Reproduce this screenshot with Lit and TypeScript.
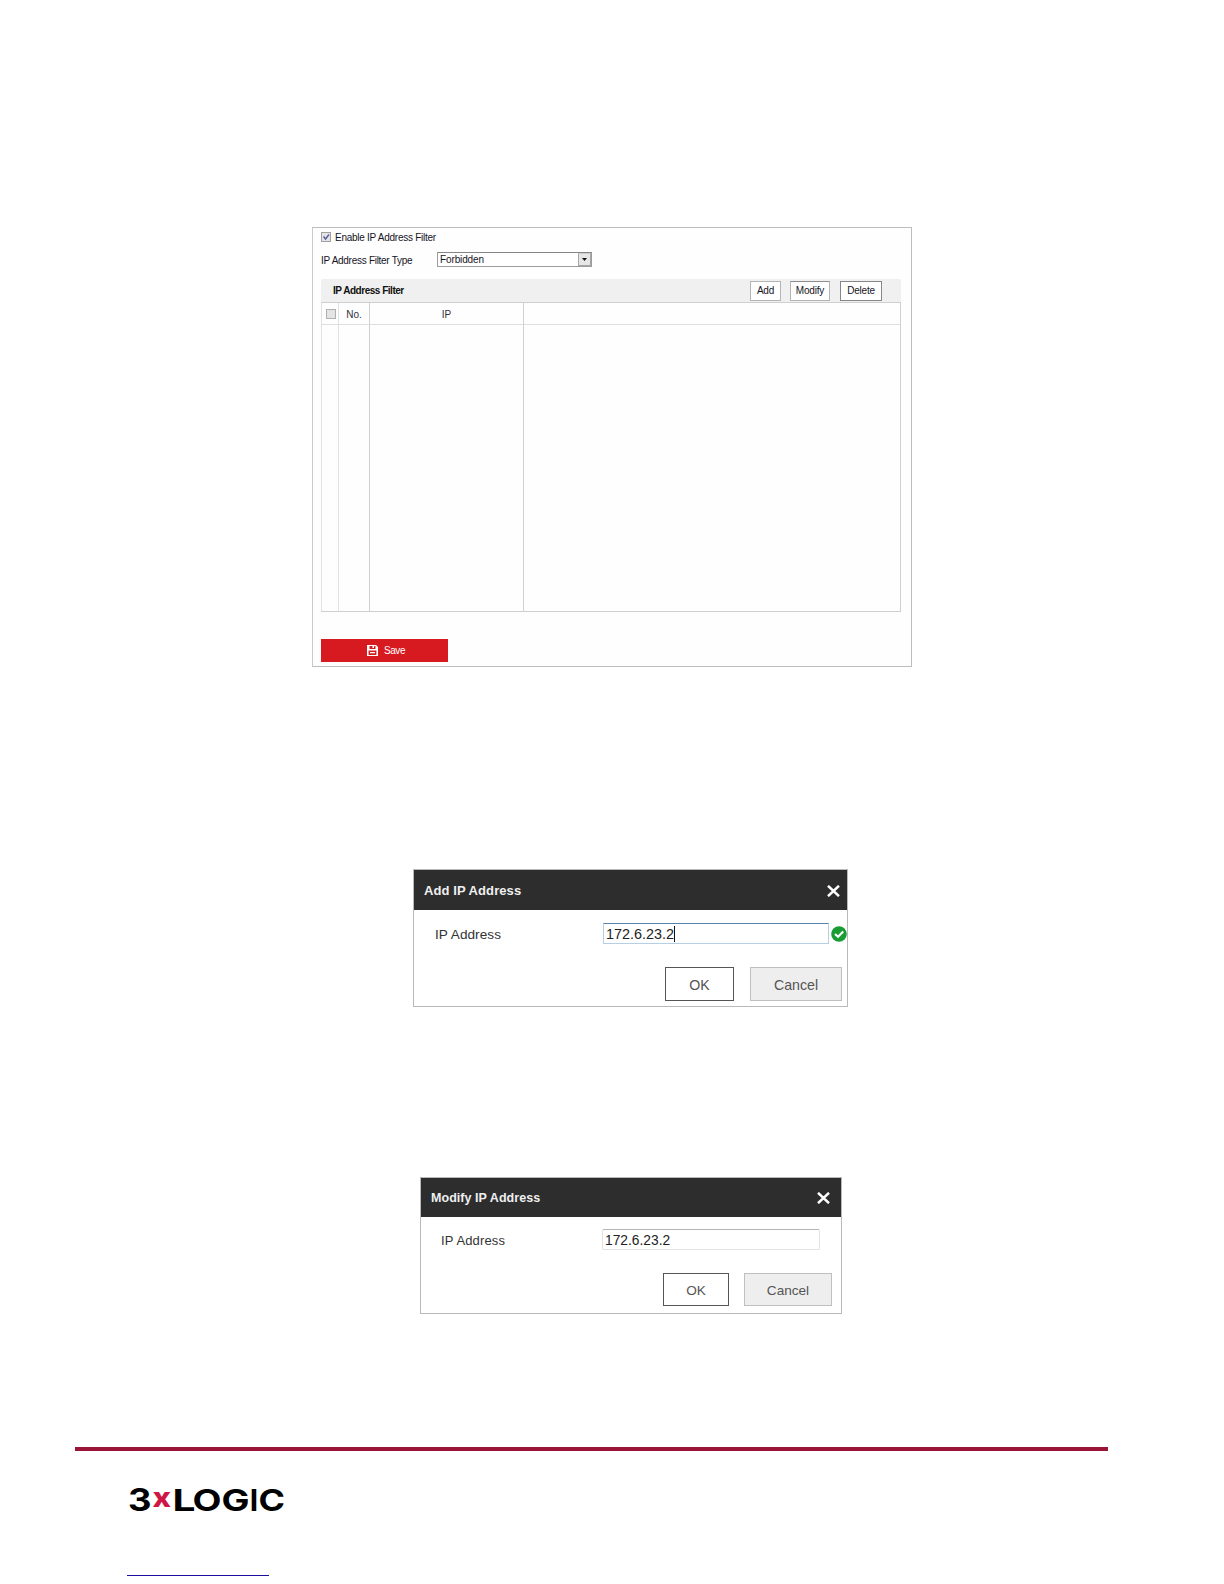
import { LitElement, html, css, nothing } from "lit";
import { customElement } from "lit/decorators.js";

@customElement("filter-panel")
class FilterPanel extends LitElement {
  static styles = css`
    :host { display: block; box-sizing: border-box; width: 600px; height: 440px; border: 1px solid #bdbdbd; border-left-color: #c9c9c9; padding: 4px 10px 0 8px; background: #fefefe; color: #151525; font-size: 10px; }
    * { box-sizing: border-box; }
    .row { display: flex; align-items: center; white-space: nowrap; }
    .enable { height: 10px; gap: 4px; letter-spacing: -0.26px; }
    .check { width: 10px; height: 10px; border: 1px solid #a0a0a0; background: #e3e3e8; display: block; }
    .check svg { display: block; width: 8px; height: 8px; }
    .type { margin-top: 10px; height: 15px; letter-spacing: -0.28px; }
    .type label { width: 116px; padding-top: 1px; }
    .select { display: flex; justify-content: space-between; align-items: center; width: 155px; height: 15px; border: 1px solid #9c9c9c; border-top-color: #858585; padding-left: 2px; letter-spacing: -0.12px; background: #fff; }
    .arrow { width: 13px; height: 13px; border: 1px solid #a5a5a5; border-top-color: #ccc; background: #e6e6e6; display: flex; align-items: center; justify-content: center; }
    .arrow svg { width: 5px; height: 3px; display: block; }
    .bar { margin-top: 12px; height: 23px; padding: 0 19px 0 12px; background: #f0f0f0; border-radius: 2px 2px 0 0; font-size: 10px; letter-spacing: -0.48px; font-weight: bold; color: #111; }
    .bar .title { flex: 1; }
    button { font: 10px "Liberation Sans", Arial, sans-serif; letter-spacing: -0.2px; height: 20px; padding: 0; border: 1px solid #b5b5b5; background: #fff; color: #151525; }
    .add { width: 31px; margin-right: 9px; }
    .modify { width: 40px; margin-right: 10px; border-top-color: #8d8d8d; }
    .delete { width: 42px; border-color: #85858a; }
    .table { display: grid; grid-template-columns: 17px 31px 154px 1fr; grid-template-rows: 22px 286px; height: 310px; border: 1px solid #cfcfcf; border-width: 1px 1px 1px 0; }
    .cell { display: flex; align-items: center; justify-content: center; border-left: 1px solid #d0d0d0; padding-top: 1px; font-size: 10px; color: #30303c; }
    .head { border-bottom: 1px solid #dedede; }
    .faint { border-left-color: #e2e2e2; }
    .blank { border-color: #b0b0b0; background: #e4e4e4; margin-left: 2px; }
    .save { display: flex; align-items: center; justify-content: center; gap: 6px; width: 127px; height: 23px; margin-top: 27px; padding-left: 3px; border: 0; background: #d71920; color: #fff; letter-spacing: -0.4px; }
    .save svg { width: 11px; height: 11px; }
  `;
  render() {
    return html`
      <div class="row enable">
        <span class="check"><svg viewBox="0 0 8 8"><path d="M1.5 3.5 3.5 6 7 1.5" fill="none" stroke="#5b6097" stroke-width="1.4" /></svg></span>
        <span>Enable IP Address Filter</span>
      </div>
      <div class="row type">
        <label>IP Address Filter Type</label>
        <div class="select"><span>Forbidden</span><span class="arrow"><svg viewBox="0 0 5 3"><path d="M0 0H5L2.5 3Z" fill="#111" /></svg></span></div>
      </div>
      <div class="row bar">
        <span class="title">IP Address Filter</span>
        <button class="add">Add</button><button class="modify">Modify</button><button class="delete">Delete</button>
      </div>
      <div class="table">
        <div class="cell head faint"><span class="check blank"></span></div>
        <div class="cell head faint">No.</div>
        <div class="cell head">IP</div>
        <div class="cell head"></div>
        <div class="cell faint"></div><div class="cell faint"></div><div class="cell"></div><div class="cell"></div>
      </div>
      <button class="save">
        <svg viewBox="0 0 11 11"><path fill="#fff" fill-rule="evenodd" d="M0 0H9L11 2V11H0ZM2.5 1V4H8.5V1H7V3H5.5V1ZM1.6 5.5V10H9.4V5.5ZM3 7H8V8.3H3Z" /></svg>
        <span>Save</span>
      </button>
    `;
  }
}

@customElement("ip-dialog")
class IpDialog extends LitElement {
  static properties = { heading: {}, variant: { reflect: true } };
  declare heading: string;
  declare variant: string;
  static styles = css`
    * { box-sizing: border-box; }
    :host { display: block; box-sizing: border-box; border: 1px solid #b9b9b9; background: #fff; color: #333; }
    .head { display: flex; align-items: center; justify-content: space-between; background: #2d2d2d; color: #efefef; font-weight: bold; white-space: nowrap; }
    .head svg { width: 13px; height: 12px; }
    .field { display: flex; align-items: center; white-space: nowrap; }
    .input { display: flex; align-items: center; height: 21px; padding-left: 2px; color: #222; background: #fff; }
    .caret { width: 1px; height: 16px; background: #111; }
    .ok-mark { width: 16px; height: 16px; margin-left: 2px; flex: none; }
    .actions { display: flex; justify-content: flex-end; }
    button { font: 14.2px "Liberation Sans", Arial, sans-serif; color: #555; padding: 2px 0 0; background: #fff; border: 1px solid #555; }
    .cancel { background: #eee; border-color: #bfbfbf; }

    :host([variant="add"]) { width: 435px; height: 138px; }
    :host([variant="add"]) .head { height: 40px; padding: 1px 7px 0 10px; font-size: 13px; letter-spacing: 0.08px; }
    :host([variant="add"]) .field { margin-top: 13px; padding-left: 21px; }
    :host([variant="add"]) label { width: 168px; font-size: 13.6px; letter-spacing: 0.05px; padding-top: 1px; }
    :host([variant="add"]) .input { width: 226px; font-size: 14.4px; border: 1px solid #b5cfe7; border-top-color: #5583ae; }
    :host([variant="add"]) .ok-mark { margin-left: 1.5px; }
    :host([variant="add"]) .actions { margin-top: 23px; padding-right: 5px; gap: 16px; }
    :host([variant="add"]) button { height: 34px; width: 69px; }
    :host([variant="add"]) .cancel { width: 92px; }

    :host([variant="modify"]) { width: 422px; height: 137px; }
    :host([variant="modify"]) .head { height: 39px; padding: 1px 11px 0 10px; font-size: 12.5px; letter-spacing: 0.05px; }
    :host([variant="modify"]) .field { margin-top: 12px; padding-left: 20px; }
    :host([variant="modify"]) label { width: 161px; font-size: 13px; letter-spacing: 0.15px; padding-top: 1px; }
    :host([variant="modify"]) .input { width: 218px; padding-top: 1px; font-size: 13.8px; border: 1px solid #e2e2e2; border-top-color: #b5b5b5; border-radius: 2px; }
    :host([variant="modify"]) .actions { margin-top: 23px; padding-right: 9px; gap: 15px; }
    :host([variant="modify"]) button { height: 33px; width: 66px; font-size: 13.6px; }
    :host([variant="modify"]) .cancel { width: 88px; }
  `;
  render() {
    const editing = this.variant === "add";
    return html`
      <div class="head">
        <span>${this.heading}</span>
        <svg viewBox="0 0 13 12"><path d="M1 .8 12 11.2M12 .8 1 11.2" stroke="#fff" stroke-width="2.5" /></svg>
      </div>
      <div class="field">
        <label>IP Address</label>
        <div class="input"><span>172.6.23.2</span>${editing ? html`<span class="caret"></span>` : nothing}</div>
        ${editing
          ? html`<svg class="ok-mark" viewBox="0 0 16 16"><circle cx="8" cy="8" r="7.8" fill="#1a9c35" /><path d="M4 8 7 10.8 12.2 5.5" fill="none" stroke="#fff" stroke-width="2.1" /></svg>`
          : nothing}
      </div>
      <div class="actions"><button>OK</button><button class="cancel">Cancel</button></div>
    `;
  }
}

@customElement("app-root")
class AppRoot extends LitElement {
  static styles = css`
    :host { display: flow-root; box-sizing: border-box; width: 1224px; height: 1584px; overflow: hidden; background: #fff; font-family: "Liberation Sans", Arial, sans-serif; }
    .panel { margin: 227px 0 0 312px; }
    .add { margin: 202px 0 0 413px; }
    .modify { margin: 170px 0 0 420px; }
    .rule { margin: 133px 0 0 75px; width: 1033px; height: 4px; background: #9a1535; }
    .logo { display: block; margin: 23px 0 0 126px; width: 170px; height: 52px; overflow: visible; font-family: Inter, "Liberation Sans", sans-serif; font-weight: 700; }
    .link { margin: 49px 0 0 127px; width: 142px; height: 1px; background: #1c0fa0; }
  `;
  render() {
    return html`
      <filter-panel class="panel"></filter-panel>
      <ip-dialog class="add" heading="Add IP Address" variant="add"></ip-dialog>
      <ip-dialog class="modify" heading="Modify IP Address" variant="modify"></ip-dialog>
      <div class="rule"></div>
      <svg class="logo" viewBox="0 0 170 52">
        <text x="2" y="37" font-size="31" textLength="23.5" lengthAdjust="spacingAndGlyphs">3</text>
        <text x="26.5" y="33" font-size="27" font-weight="800" fill="#cf1745" textLength="18.5" lengthAdjust="spacingAndGlyphs">x</text>
        <text y="36.5" font-size="30">
          <tspan x="46.5" textLength="23" lengthAdjust="spacingAndGlyphs">L</tspan><tspan x="66.5" textLength="29" lengthAdjust="spacingAndGlyphs">O</tspan><tspan x="95.5" textLength="28" lengthAdjust="spacingAndGlyphs">G</tspan><tspan x="123.8">I</tspan><tspan x="132.5" textLength="26.5" lengthAdjust="spacingAndGlyphs">C</tspan>
        </text>
      </svg>
      <div class="link"></div>
    `;
  }
}
